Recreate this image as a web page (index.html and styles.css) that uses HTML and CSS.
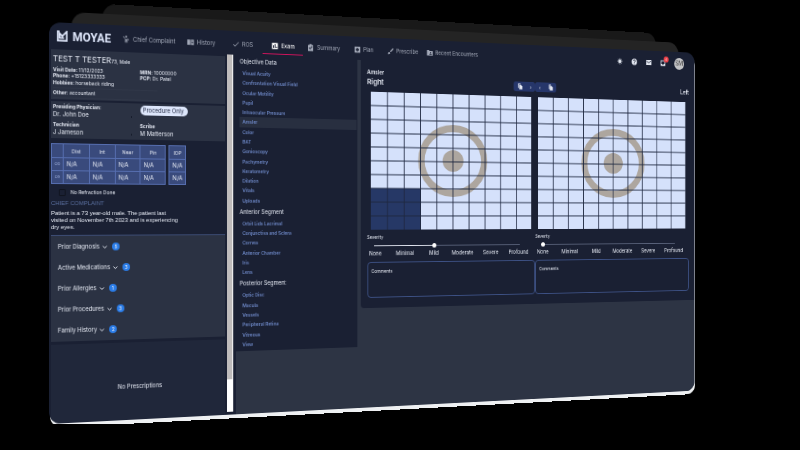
FILE: index.html
```html
<!DOCTYPE html>
<html lang="en">
<head>
    <meta charset="UTF-8">
    <meta name="viewport" content="width=device-width, initial-scale=1.0">
    <title>Moyae - Exam</title>
    <link rel="stylesheet" href="styles.css">
</head>
<body>
    <div class="stage">
        <div class="tilt">
            <div class="sheet sheet-far"></div>
            <div class="sheet sheet-near"></div>
            <div class="window">
                <header class="topbar">
                    <a href="#" class="brand">
                        <svg class="brand-mark" viewBox="0 0 12 12"><path d="M3 1H1v10h10V1L6 6 3 3v5h5" fill="none" stroke="currentColor" stroke-width="1.800"/></svg>
                        MOYAE
                    </a>
                    <nav class="tabs">
                        <a href="#" class="tab"><svg class="icon" viewBox="0 0 24 24"><path d="M4 2l4 6v14h3v-7h2v7h3V9l5 3-1 2-6-3H8L2 4z"/><circle cx="12" cy="4" r="3"/></svg>Chief Complaint</a>
                        <a href="#" class="tab"><svg class="icon" viewBox="0 0 24 24"><path d="M1 4h10v16H1zM13 4h10v16H13zM15 8v2h6V8zm0 4v2h6v-2z" fill-rule="evenodd"/></svg>History</a>
                        <a href="#" class="tab"><svg class="icon" viewBox="0 0 24 24"><path d="M9 16.200 4.800 12l-1.800 1.400L9 19.500 22 6l-1.400-1.400z"/></svg>ROS</a>
                        <a href="#" class="tab active"><svg class="icon" viewBox="0 0 24 24"><path d="M2 2h20v20H2zM6 10v8h3v-8zm5-4v12h3V6zm5 8v4h3v-4z" fill-rule="evenodd"/></svg>Exam</a>
                        <a href="#" class="tab"><svg class="icon" viewBox="0 0 24 24"><path d="M3 4h5V1h8v3h5v19H3zM10 18l9-9-2-2-7 7-3-3-2 2z" fill-rule="evenodd"/></svg>Summary</a>
                        <a href="#" class="tab"><svg class="icon" viewBox="0 0 24 24"><path d="M2 2h20v20H2zM10 6v4H6v4h4v4h4v-4h4v-4h-4V6z" fill-rule="evenodd"/></svg>Plan</a>
                        <a href="#" class="tab"><svg class="icon" viewBox="0 0 24 24"><path d="M2 22c0-5 2-7 5-7l3 3c0 3-3 4-8 4zM9 13 20 2l3 3-11 11z"/></svg>Prescribe</a>
                        <a href="#" class="tab"><svg class="icon" viewBox="0 0 24 24"><path d="M1 3h8l2 3h12v15H1zM14 9a2 2 0 1 0 .1 0zM10 18h9v-2l-4-2h-1l-4 2z" fill-rule="evenodd"/></svg>Recent Encounters</a>
                    </nav>
                    <div class="tools">
                        <button class="tool" aria-label="Theme"><svg class="icon" viewBox="0 0 24 24"><circle cx="12" cy="12" r="6"/><path d="M12 1v22M1 12h22M4 4l16 16M20 4 4 20" stroke="currentColor" stroke-width="2"/></svg></button>
                        <button class="tool" aria-label="Help"><svg class="icon" viewBox="0 0 24 24"><circle cx="12" cy="12" r="11"/><path d="M8 9c0-5 8-5 8 0 0 3-4 3-4 6M12 17v3" fill="none" stroke="#1a2033" stroke-width="2.500"/></svg></button>
                        <button class="tool" aria-label="Mail"><svg class="icon" viewBox="0 0 24 24"><path d="M1 3h22v18H1z"/><path d="M3 7l9 6 9-6" fill="none" stroke="#1a2033" stroke-width="2.500"/></svg></button>
                        <button class="tool" aria-label="Inbox"><svg class="icon" viewBox="0 0 24 24"><path d="M2 2h20v20H2zM5 5v10h4l1 2h4l1-2h4V5z" fill-rule="evenodd"/></svg><span class="alert">4</span></button>
                        <button class="avatar">SM</button>
                    </div>
                </header>

                <div class="body">
                    <aside class="sidebar">
                        <section class="card patient">
                            <h1 class="patient-name">TEST T TESTER<small>73, Male</small></h1>
                            <div class="pair">
                                <p><b>Visit Date:</b> 11/12/2023</p>
                                <p><b>MRN:</b> 10000000</p>
                                <p><b>Phone:</b> +15123333333</p>
                                <p><b>PCP:</b> Dr. Patel</p>
                            </div>
                            <p class="fact"><b>Hobbies:</b> horseback riding</p>
                            <p class="fact"><b>Other:</b> accountant</p>
                        </section>

                        <section class="card staff">
                            <div class="field">
                                <label for="physician">Presiding Physician:</label>
                                <select id="physician"><option>Dr. John Doe</option></select>
                            </div>
                            <div class="field">
                                <select class="pill" aria-label="Visit type"><option>Procedure Only</option></select>
                            </div>
                            <div class="field">
                                <label for="technician">Technician</label>
                                <select id="technician"><option>J Jameson</option></select>
                            </div>
                            <div class="field">
                                <label for="scribe">Scribe</label>
                                <select id="scribe"><option>M Matterson</option></select>
                            </div>
                        </section>

                        <div class="readings">
                            <table class="vision">
                                <tr><th class="eye"></th><th>Dist</th><th>Int</th><th>Near</th><th>Pin</th></tr>
                                <tr><th class="eye">OD</th><td>N/A</td><td>N/A</td><td>N/A</td><td>N/A</td></tr>
                                <tr><th class="eye">OS</th><td>N/A</td><td>N/A</td><td>N/A</td><td>N/A</td></tr>
                            </table>
                            <table class="iop">
                                <tr><th>IOP</th></tr>
                                <tr><td>N/A</td></tr>
                                <tr><td>N/A</td></tr>
                            </table>
                        </div>
                        <label class="refraction"><input type="checkbox"> No Refraction Done</label>

                        <section class="complaint">
                            <h2>CHIEF COMPLAINT</h2>
                            <p>Patient is a 73 year-old male. The patient last<br>visited on November 7th 2023 and is experiencing<br>dry eyes.</p>
                        </section>

                        <section class="card history">
                            <button class="fold">Prior Diagnosis <svg class="chevron" viewBox="0 0 10 10"><path d="M1 3l4 4 4-4"/></svg><span class="count">5</span></button>
                            <button class="fold">Active Medications <svg class="chevron" viewBox="0 0 10 10"><path d="M1 3l4 4 4-4"/></svg><span class="count">3</span></button>
                            <button class="fold">Prior Allergies <svg class="chevron" viewBox="0 0 10 10"><path d="M1 3l4 4 4-4"/></svg><span class="count">1</span></button>
                            <button class="fold">Prior Procedures <svg class="chevron" viewBox="0 0 10 10"><path d="M1 3l4 4 4-4"/></svg><span class="count">3</span></button>
                            <button class="fold">Family History <svg class="chevron" viewBox="0 0 10 10"><path d="M1 3l4 4 4-4"/></svg><span class="count">2</span></button>
                        </section>

                        <section class="prescriptions">No Prescriptions</section>
                    </aside>
                    <div class="scrollbar"><div class="scroll-thumb"></div></div>

                    <main class="content">
                        <nav class="sections">
                            <h2>Objective Data</h2>
                            <a href="#">Visual Acuity</a>
                            <a href="#">Confrontation Visual Field</a>
                            <a href="#">Ocular Motility</a>
                            <a href="#">Pupil</a>
                            <a href="#">Intraocular Pressure</a>
                            <a href="#" class="current">Amsler</a>
                            <a href="#">Color</a>
                            <a href="#">BAT</a>
                            <a href="#">Gonioscopy</a>
                            <a href="#">Pachymetry</a>
                            <a href="#">Keratometry</a>
                            <a href="#">Dilation</a>
                            <a href="#">Vitals</a>
                            <a href="#">Uploads</a>
                            <h2>Anterior Segment</h2>
                            <a href="#">Orbit Lids Lacrimal</a>
                            <a href="#">Conjunctiva and Sclera</a>
                            <a href="#">Cornea</a>
                            <a href="#">Anterior Chamber</a>
                            <a href="#">Iris</a>
                            <a href="#">Lens</a>
                            <h2>Posterior Segment</h2>
                            <a href="#">Optic Disc</a>
                            <a href="#">Macula</a>
                            <a href="#">Vessels</a>
                            <a href="#">Peripheral Retina</a>
                            <a href="#">Vitreous</a>
                            <a href="#">View</a>
                        </nav>

                        <section class="panel">
                            <h2 class="panel-title">Amsler</h2>
                            <div class="eyes-bar">
                                <span class="right-eye">Right</span>
                                <div class="copy-group">
                                    <button class="copy" aria-label="Copy right to left"><svg class="icon" viewBox="0 0 24 24"><path d="M3 1h11v3H6v14H3z"/><path d="M8 6h8l6 6v11H8z"/></svg><span>›</span></button>
                                    <button class="copy" aria-label="Copy left to right"><span>‹</span><svg class="icon" viewBox="0 0 24 24"><path d="M3 1h11v3H6v14H3z"/><path d="M8 6h8l6 6v11H8z"/></svg></button>
                                </div>
                                <span class="left-eye">Left</span>
                            </div>
                            <div class="eyes">
                                <div class="eye-col">
                                    <svg class="amsler" viewBox="0 0 200 150" preserveAspectRatio="none">
                                        <rect class="paper" width="200" height="150"/>
                                        <rect class="marked" y="105" width="60" height="45"/>
                                        <ellipse class="ring" cx="100" cy="74" rx="39" ry="36"/>
                                        <ellipse class="dot" cx="100" cy="74" rx="13" ry="12"/>
                                        <path class="lines" d="M20 0v150M40 0v150M60 0v150M80 0v150M100 0v150M120 0v150M140 0v150M160 0v150M180 0v150M0 15h200M0 30h200M0 45h200M0 60h200M0 75h200M0 90h200M0 105h200M0 120h200M0 135h200"/>
                                    </svg>
                                    <div class="severity">
                                        <label for="severity-right">Severity</label>
                                        <input type="range" id="severity-right" class="mild" min="0" max="5" value="2">
                                        <div class="marks"><span>None</span><span>Minimal</span><span>Mild</span><span>Moderate</span><span>Severe</span><span>Profound</span></div>
                                    </div>
                                    <textarea class="comments" placeholder="Comments" aria-label="Comments, right eye"></textarea>
                                </div>
                                <div class="eye-col">
                                    <svg class="amsler" viewBox="0 0 200 150" preserveAspectRatio="none">
                                        <rect class="paper" width="200" height="150"/>
                                        <ellipse class="ring" cx="100" cy="74" rx="39" ry="36"/>
                                        <ellipse class="dot" cx="100" cy="74" rx="13" ry="12"/>
                                        <path class="lines" d="M20 0v150M40 0v150M60 0v150M80 0v150M100 0v150M120 0v150M140 0v150M160 0v150M180 0v150M0 15h200M0 30h200M0 45h200M0 60h200M0 75h200M0 90h200M0 105h200M0 120h200M0 135h200"/>
                                    </svg>
                                    <div class="severity">
                                        <label for="severity-left">Severity</label>
                                        <input type="range" id="severity-left" min="0" max="5" value="0">
                                        <div class="marks"><span>None</span><span>Minimal</span><span>Mild</span><span>Moderate</span><span>Severe</span><span>Profound</span></div>
                                    </div>
                                    <textarea class="comments" placeholder="Comments" aria-label="Comments, left eye"></textarea>
                                </div>
                            </div>
                        </section>
                    </main>
                </div>
            </div>
        </div>
    </div>
</body>
</html>
```
FILE: styles.css
```css
* {
    box-sizing: border-box;
}
body {
    margin: 0;
    overflow: hidden;
    background-color: #000;
    color: #e4e8f2;
    font-family: Inter, "Liberation Sans", sans-serif;
    font-size: 6px;
    line-height: 8px;
}
h1, h2, p {
    margin: 0;
    font-size: inherit;
    font-weight: inherit;
}
a {
    color: inherit;
    text-decoration: none;
}
button, select, input, textarea {
    margin: 0;
    padding: 0;
    border: 0;
    background: none;
    color: inherit;
    font: inherit;
}

/* tilted stack of windows */
.stage {
    padding: 22px 0 0 49px;
}
.tilt {
    position: relative;
    width: 97.5vw;
    transform-origin: 0 193px;
    transform: perspective(713px) rotateY(10deg);
}
.sheet {
    position: absolute;
    height: 60px;
    border-radius: 14px;
}
.sheet-near {
    top: -11px;
    left: 3%;
    right: 3%;
    background-color: #242424;
}
.sheet-far {
    top: -21px;
    left: 7%;
    right: 7%;
    background-color: #191919;
}
.window {
    position: relative;
    display: flex;
    flex-direction: column;
    min-height: calc(100vh - 48px);
    border-radius: 12px;
    overflow: hidden;
    background-color: #1a2033;
    box-shadow: 1px 4px 0 #eef0f2;
}

/* top bar */
.topbar {
    display: flex;
    align-items: center;
    height: 25px;
    padding: 0 15px 0 8px;
}
.brand {
    display: flex;
    align-items: center;
    gap: 5px;
    width: 63px;
    padding-top: 2px;
    color: #dfe7fb;
    font-family: Roboto, sans-serif;
    font-size: 12px;
    font-weight: 700;
    line-height: 14px;
}
.brand-mark {
    width: 11px;
    height: 11px;
}
.icon {
    width: 8px;
    height: 8px;
    flex: none;
    fill: currentColor;
}
.tabs {
    display: flex;
    align-self: stretch;
    flex: 1;
}
.tab {
    display: flex;
    align-items: center;
    justify-content: center;
    gap: 3px;
    min-width: 46px;
    height: 23px;
    padding: 5px 5px 0;
    border-bottom: 1px solid transparent;
    color: #a3a9b8;
    white-space: nowrap;
}
.tab.active {
    border-color: #d0135c;
    color: #fff;
}
.tools {
    display: flex;
    align-items: center;
    gap: 12px;
    padding-top: 2px;
}
.tool {
    position: relative;
    display: flex;
}
.alert {
    position: absolute;
    top: -4px;
    right: -4px;
    width: 7px;
    border-radius: 4px;
    background-color: #f0434a;
    font-size: 4px;
    line-height: 7px;
    text-align: center;
}
.avatar {
    width: 14px;
    height: 14px;
    border-radius: 50%;
    background-color: #c3c3c5;
    color: #444;
    font-size: 7px;
    text-align: center;
}

.body {
    display: flex;
    flex: 1;
}

/* patient sidebar */
.sidebar {
    display: flex;
    flex-direction: column;
    width: 24%;
    padding: 2px 0 0 2px;
}
.card {
    background-color: #2b3243;
}
.patient {
    padding: 5px 2px 1px;
    font-size: 5px;
    line-height: 6px;
}
.patient-name {
    margin-bottom: 2px;
    font-size: 8px;
    line-height: 9px;
}
.patient-name small {
    font-size: 5px;
}
.pair, .staff {
    display: grid;
    grid-template-columns: 1fr 1fr;
}
.fact {
    width: 60%;
    padding: 1px 0 2px;
    border-bottom: 1px solid #303748;
}
.staff {
    margin-top: 2px;
    padding: 1px 2px 0;
}
.field {
    display: flex;
    flex-direction: column;
    align-items: flex-start;
    padding-bottom: 2px;
}
.field label {
    font-size: 5px;
    font-weight: 700;
}
.field select {
    appearance: none;
    width: 90%;
    height: 8px;
    background: radial-gradient(circle at 82px 5px, #171d2c 1px, transparent 1px);
}
.field .pill {
    width: auto;
    height: 10px;
    margin-top: 1px;
    padding: 0 3px;
    border-radius: 5px;
    background: #dde6fb;
    color: #1f2740;
}
.readings {
    display: flex;
    gap: 3px;
    margin-top: 5px;
}
table {
    border-collapse: collapse;
    background-color: #394a7c;
}
th, td {
    height: 13px;
    padding: 0 3px;
    border: 1px solid #566eb0;
    text-align: left;
    line-height: 8px;
}
th {
    font-size: 5px;
    font-weight: 400;
    text-align: center;
}
tr:first-child th {
    height: 14px;
}
.vision {
    width: 65%;
    table-layout: fixed;
}
.vision .eye {
    width: 12px;
    padding: 0;
    color: #9fb0dd;
    font-size: 4px;
}
.refraction {
    display: flex;
    align-items: center;
    gap: 5px;
    margin-top: 4px;
    padding-left: 8px;
    font-size: 5px;
}
.refraction input {
    appearance: none;
    width: 7px;
    height: 7px;
    border: 1px solid #10141f;
    border-radius: 1px;
}
.complaint {
    margin-top: 4px;
    padding-bottom: 2px;
    font-family: "Liberation Sans", sans-serif;
    line-height: 7px;
}
.complaint h2 {
    margin-bottom: 3px;
    color: #5a6f9f;
}
.history {
    display: flex;
    flex-direction: column;
    gap: 13px;
    margin-top: 2px;
    padding: 7px;
    border-top: 1px solid #3c4c74;
}
.fold {
    display: flex;
    align-items: center;
    gap: 3px;
}
.chevron {
    width: 5px;
    height: 5px;
    fill: none;
    stroke: currentColor;
    stroke-width: 2;
}
.count {
    width: 8px;
    margin-left: 2px;
    border-radius: 4px;
    background-color: #2b7de9;
    font-size: 5px;
    line-height: 8px;
    text-align: center;
}
.prescriptions {
    display: flex;
    flex: 1;
    align-items: center;
    justify-content: center;
    margin-top: 3px;
    padding-top: 11px;
    background-color: #20273a;
}
.scrollbar {
    width: 7px;
    margin: 0 3px 3px 2px;
    padding-right: 1px;
    background-color: #fff;
}
.scroll-thumb {
    height: 91%;
    background-color: #bfbcbc;
}

/* exam content */
.content {
    display: flex;
    flex: 1;
    align-items: flex-start;
    gap: 4px;
    background-color: #2d3444;
}
.sections {
    display: flex;
    flex-direction: column;
    width: 24%;
    min-height: 311px;
    padding: 0 1px 2px 4px;
    background-color: #1a2033;
}
.sections h2 {
    line-height: 14px;
}
.sections a {
    display: flex;
    flex: 1;
    align-items: center;
    padding-left: 3px;
    color: #6c86c4;
    font-size: 5px;
    font-weight: 600;
}
.sections .current {
    background-color: #282f40;
}
.panel {
    flex: 1;
    padding: 9px 8px 11px;
    border-radius: 0 0 0 4px;
    background-color: #1a2033;
}
.panel-title {
    font-size: 6px;
    font-weight: 600;
}
.eyes-bar {
    display: grid;
    grid-template-columns: 1fr auto 1fr;
    align-items: center;
    margin-bottom: 6px;
}
.right-eye {
    font-size: 8px;
    font-weight: 600;
}
.left-eye {
    font-size: 7px;
    font-weight: 500;
    text-align: right;
}
.copy-group {
    display: flex;
}
.copy {
    display: flex;
    align-items: center;
    justify-content: space-around;
    width: 28px;
    height: 11px;
    border-radius: 3px;
    background-color: #26366a;
}
.copy .icon {
    width: 7px;
    height: 7px;
}
.eyes {
    display: grid;
    grid-template-columns: 1fr 1fr;
}
.eye-col {
    display: flex;
    flex-direction: column;
}
.amsler {
    height: 150px;
    margin: 0 5px 4px 4px;
}
.paper {
    fill: #d5e1fb;
}
.marked {
    fill: #263866;
}
.ring {
    fill: none;
    stroke: #ada69f;
    stroke-width: 8;
}
.dot {
    fill: #ada69f;
}
.lines {
    fill: none;
    stroke: #1f2840;
    stroke-width: 1;
}
.severity {
    display: flex;
    flex-direction: column;
    padding: 0 20px 5px 8px;
}
.severity label {
    margin-left: -8px;
    font-size: 5px;
}
.severity input {
    appearance: none;
    height: 10px;
    background: linear-gradient(#59627a, #59627a) center / 100% 1px no-repeat;
}
.severity .mild {
    background-image: linear-gradient(to right, #dfe3ee 40%, #59627a 40%);
}
.severity input::-webkit-slider-thumb {
    appearance: none;
    width: 5px;
    height: 5px;
    border-radius: 50%;
    background-color: #fff;
}
.marks {
    display: grid;
    grid-template-columns: repeat(6, 1fr);
    margin: 0 -16px;
    text-align: center;
}
.comments {
    height: 39px;
    padding: 5px 4px;
    border: 1px solid #3d5185;
    border-radius: 4px;
    resize: none;
    font-size: 5px;
}
.comments::placeholder {
    color: #e4e8f2;
}
```
